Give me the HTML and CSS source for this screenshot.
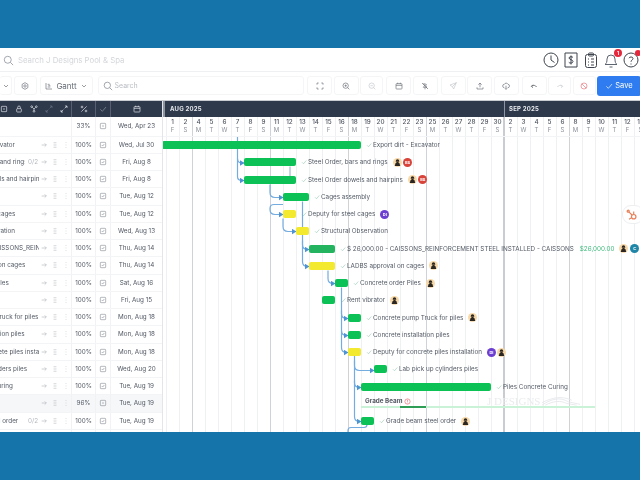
FILE: index.html
```html
<!DOCTYPE html>
<html lang="en">
<head>
    <meta charset="UTF-8">
    <title>Gantt - J Designs Pool &amp; Spa</title>
    <link rel="stylesheet" href="styles.css">
</head>
<body>
    <svg class="defs" xmlns="http://www.w3.org/2000/svg">
        <symbol id="i-search" viewBox="0 0 12 12"><circle cx="5.2" cy="5.2" r="3.8"/><path d="M8 8l3 3"/></symbol>
        <symbol id="i-chev" viewBox="0 0 12 12"><path d="M3 4.5l3 3 3-3"/></symbol>
        <symbol id="i-gear" viewBox="0 0 12 12"><path d="M6 1l4.3 2.5v5L6 11 1.700 8.500v-5z"/><circle cx="6" cy="6" r="1.800"/></symbol>
        <symbol id="i-gantt" viewBox="0 0 12 12"><path d="M1.500 1.500v9h9M4 3.500h3M5 5.500h3M4 7.500h4"/></symbol>
        <symbol id="i-full" viewBox="0 0 12 12"><path d="M1.500 4V1.500H4M8 1.500h2.500V4M10.500 8v2.500H8M4 10.500H1.500V8"/></symbol>
        <symbol id="i-zin" viewBox="0 0 12 12"><circle cx="5.500" cy="5.500" r="4"/><path d="M8.500 8.500L11 11M3.800 5.500h3.400M5.500 3.800v3.400"/></symbol>
        <symbol id="i-zout" viewBox="0 0 12 12"><circle cx="5.500" cy="5.500" r="4"/><path d="M8.500 8.500L11 11M3.800 5.500h3.400"/></symbol>
        <symbol id="i-cal" viewBox="0 0 12 12"><rect x="1.500" y="2.500" width="9" height="8" rx="1"/><path d="M1.500 5h9M4 1v2M8 1v2"/></symbol>
        <symbol id="i-hide" viewBox="0 0 12 12"><path d="M1.500 1.500l9 9M4 2.500l4 1-1 2.500 2 2H3.500l2-2.500zM6 8.500V11"/></symbol>
        <symbol id="i-send" viewBox="0 0 12 12"><path d="M11 1L1.500 4.500 5 7l2 3.500zM11 1L5 7"/></symbol>
        <symbol id="i-up" viewBox="0 0 12 12"><path d="M6 8V1.500M3.500 4L6 1.500 8.500 4M1.500 8v2.500h9V8"/></symbol>
        <symbol id="i-cloud" viewBox="0 0 12 12"><path d="M3.500 8.500a2.500 2.500 0 0 1 0-5 3 3 0 0 1 5.500 0 2.500 2.500 0 0 1-.5 5M6 5.500V11M4.500 9.500L6 11l1.500-1.500"/></symbol>
        <symbol id="i-undo" viewBox="0 0 12 12"><path d="M2 6.500l2.500-2.500M2 6.500l2.500 2M2.500 6.300c3-2 5.500-1.500 7.500 1.200"/></symbol>
        <symbol id="i-redo" viewBox="0 0 12 12"><path d="M10 6.500L7.500 4M10 6.500l-2.500 2M9.500 6.300c-3-2-5.500-1.500-7.500 1.200"/></symbol>
        <symbol id="i-block" viewBox="0 0 12 12"><circle cx="6" cy="6" r="4.500"/><path d="M2.800 2.800l6.400 6.400"/></symbol>
        <symbol id="i-check" viewBox="0 0 12 12"><path d="M2 6.500L5 9.500 10.500 3"/></symbol>
        <symbol id="i-clock" viewBox="0 0 16 16"><circle cx="8" cy="8" r="7"/><path d="M8 3.500V8l3.500 2.500"/></symbol>
        <symbol id="i-bill" viewBox="0 0 16 16"><path d="M2 1h12v14H2zM10 5.500C9.500 4.500 6 4.200 6 6s4 1.500 4 3.500-3.500 2-4.200.8M8 3.500v9"/></symbol>
        <symbol id="i-clip" viewBox="0 0 16 16"><rect x="2.500" y="2.500" width="11" height="13" rx="2"/><rect x="5.500" y="1" width="5" height="3" rx="1"/><path d="M5 7h1M8 7h3M5 10h1M8 10h3M5 13h1M8 13h3"/></symbol>
        <symbol id="i-bell" viewBox="0 0 16 16"><path d="M2 12.500c1.500-1 2-2.500 2-5.500a4 4 0 0 1 8 0c0 3 .5 4.500 2 5.500zM6.500 15h3"/></symbol>
        <symbol id="i-help" viewBox="0 0 16 16"><circle cx="8" cy="8" r="7"/><path d="M6 6.200C6.300 4.500 10 4.500 10 6.500 10 8 8 8 8 9.800M8 11.500v1"/></symbol>
        <symbol id="i-square" viewBox="0 0 12 12"><rect x="2" y="2" width="8" height="8" rx="1"/><path d="M4.500 6h3"/></symbol>
        <symbol id="i-lock" viewBox="0 0 12 12"><rect x="2.500" y="5.500" width="7" height="5" rx="1"/><path d="M4 5.500V3.500a2 2 0 0 1 4 0v2"/></symbol>
        <symbol id="i-fork" viewBox="0 0 12 12"><circle cx="2.500" cy="2.500" r="1.300"/><circle cx="9.500" cy="2.500" r="1.300"/><circle cx="6" cy="9.500" r="1.300"/><path d="M3.500 3.500L6 6l2.500-2.500M6 6v2.500"/></symbol>
        <symbol id="i-expand" viewBox="0 0 12 12"><path d="M7 5l3.500-3.500M7.500 1.500h3v3M5 7l-3.500 3.500M1.500 7.500v3h3"/></symbol>
        <symbol id="i-percent" viewBox="0 0 12 12"><circle cx="3" cy="3" r="1.300"/><circle cx="9" cy="9" r="1.300"/><path d="M10 2L2 10"/></symbol>
        <symbol id="i-arrow" viewBox="0 0 12 12"><path d="M2.500 6h7M7 3.500L9.500 6 7 8.500"/></symbol>
        <symbol id="i-grip" viewBox="0 0 12 12"><path d="M4.800 1.500v2M7.200 1.500v2M4.800 5v2M7.200 5v2M4.800 8.500v2M7.200 8.500v2"/></symbol>
        <symbol id="i-dots" viewBox="0 0 12 12"><path d="M6 2v1M6 5.500v1M6 9v1"/></symbol>
        <symbol id="i-task" viewBox="0 0 12 12"><rect x="2" y="2" width="8" height="8" rx="1"/><path d="M4 6l1.500 1.500 2.500-3"/></symbol>
        <symbol id="i-worker" viewBox="0 0 12 12"><circle cx="6" cy="6" r="6" fill="#f8d9a9" stroke="none"/><path d="M6 1.800a2.300 2.300 0 0 1 2.300 2.300v.9H3.700v-.9A2.300 2.300 0 0 1 6 1.800zM4.500 5.400h3v1.400h-3zM2.300 10.500l1.200-3.700h5l1.200 3.700z" fill="#2a2622" stroke="none"/></symbol>
        <symbol id="i-warn" viewBox="0 0 12 12"><circle cx="6" cy="6" r="4.500"/><path d="M6 3v3.500M6 8v1"/></symbol>
    </svg>

    <div class="band"></div>

    <main class="app">
        <div class="searchbar">
            <svg class="ic-search"><use href="#i-search"/></svg>
            <span class="search-text">Search J Designs Pool &amp; Spa</span>
            <div class="top-icons">
                <svg class="top-ic"><use href="#i-clock"/></svg>
                <svg class="top-ic"><use href="#i-bill"/></svg>
                <svg class="top-ic"><use href="#i-clip"/></svg>
                <span class="top-wrap"><svg class="top-ic light"><use href="#i-bell"/></svg><span class="badge">1</span></span>
                <span class="top-wrap"><svg class="top-ic"><use href="#i-help"/></svg><span class="dot"></span></span>
            </div>
        </div>

        <div class="toolbar">
            <button class="tbtn first"><svg class="ic"><use href="#i-chev"/></svg></button>
            <button class="tbtn gear"><svg class="ic"><use href="#i-gear"/></svg></button>
            <button class="tbtn view"><svg class="ic"><use href="#i-gantt"/></svg>Gantt<svg class="ic"><use href="#i-chev"/></svg></button>
            <div class="tsearch"><svg class="ic big"><use href="#i-search"/></svg>Search</div>
            <button class="tbtn"><svg class="ic"><use href="#i-full"/></svg></button>
            <button class="tbtn"><svg class="ic"><use href="#i-zin"/></svg></button>
            <button class="tbtn off narrow"><svg class="ic"><use href="#i-zout"/></svg></button>
            <button class="tbtn push"><svg class="ic"><use href="#i-cal"/></svg></button>
            <button class="tbtn"><svg class="ic"><use href="#i-hide"/></svg></button>
            <button class="tbtn off push"><svg class="ic"><use href="#i-send"/></svg></button>
            <button class="tbtn"><svg class="ic"><use href="#i-up"/></svg></button>
            <button class="tbtn"><svg class="ic"><use href="#i-cloud"/></svg></button>
            <button class="tbtn dark push"><svg class="ic"><use href="#i-undo"/></svg></button>
            <button class="tbtn off narrow"><svg class="ic"><use href="#i-redo"/></svg></button>
            <button class="tbtn red narrow"><svg class="ic"><use href="#i-block"/></svg></button>
            <button class="save"><svg class="ic"><use href="#i-check"/></svg>Save</button>
        </div>

        <div class="gantt">
            <section class="table">
                <div class="thead">
                    <span class="th-icons">
                        <svg class="ic"><use href="#i-square"/></svg>
                        <svg class="ic"><use href="#i-lock"/></svg>
                        <svg class="ic"><use href="#i-fork"/></svg>
                        <svg class="ic dim"><use href="#i-expand"/></svg>
                        <svg class="ic"><use href="#i-expand"/></svg>
                    </span>
                    <span class="pct"><svg class="ic"><use href="#i-percent"/></svg></span>
                    <span class="chk"><svg class="ic"><use href="#i-check"/></svg></span>
                    <span class="due"><svg class="ic"><use href="#i-cal"/></svg></span>
                </div>
                <div class="row total">
                    <span class="name"></span><span class="acts"></span>
                    <span class="pct">33%</span>
                    <span class="chk"><svg class="ic"><use href="#i-square"/></svg></span>
                    <span class="due">Wed, Apr 23</span>
                </div>
                <div class="row"><span class="name">Export dirt - Excavator</span><span class="acts"><svg class="ic"><use href="#i-arrow"/></svg><svg class="ic"><use href="#i-grip"/></svg><svg class="ic"><use href="#i-dots"/></svg></span><span class="pct">100%</span><span class="chk"><svg class="ic"><use href="#i-task"/></svg></span><span class="due">Wed, Jul 30</span></div>
                <div class="row"><span class="name">Steel Order, bars and rings</span><span class="count">0/2</span><span class="acts"><svg class="ic"><use href="#i-arrow"/></svg><svg class="ic"><use href="#i-grip"/></svg><svg class="ic"><use href="#i-dots"/></svg></span><span class="pct">100%</span><span class="chk"><svg class="ic"><use href="#i-task"/></svg></span><span class="due">Fri, Aug 8</span></div>
                <div class="row"><span class="name">Steel Order dowels and hairpins</span><span class="acts"><svg class="ic"><use href="#i-arrow"/></svg><svg class="ic"><use href="#i-grip"/></svg><svg class="ic"><use href="#i-dots"/></svg></span><span class="pct">100%</span><span class="chk"><svg class="ic"><use href="#i-task"/></svg></span><span class="due">Fri, Aug 8</span></div>
                <div class="row"><span class="name">Cages assembly</span><span class="acts"><svg class="ic"><use href="#i-arrow"/></svg><svg class="ic"><use href="#i-grip"/></svg><svg class="ic"><use href="#i-dots"/></svg></span><span class="pct">100%</span><span class="chk"><svg class="ic"><use href="#i-task"/></svg></span><span class="due">Tue, Aug 12</span></div>
                <div class="row"><span class="name">Deputy for steel cages</span><span class="acts"><svg class="ic"><use href="#i-arrow"/></svg><svg class="ic"><use href="#i-grip"/></svg><svg class="ic"><use href="#i-dots"/></svg></span><span class="pct">100%</span><span class="chk"><svg class="ic"><use href="#i-task"/></svg></span><span class="due">Tue, Aug 12</span></div>
                <div class="row"><span class="name">Structural Observation</span><span class="acts"><svg class="ic"><use href="#i-arrow"/></svg><svg class="ic"><use href="#i-grip"/></svg><svg class="ic"><use href="#i-dots"/></svg></span><span class="pct">100%</span><span class="chk"><svg class="ic"><use href="#i-task"/></svg></span><span class="due">Wed, Aug 13</span></div>
                <div class="row"><span class="name">$ 26,000.00 - CAISSONS_REINFORCEMENT STEEL INSTALLED - CAISSONS</span><span class="acts"><svg class="ic"><use href="#i-arrow"/></svg><svg class="ic"><use href="#i-grip"/></svg><svg class="ic"><use href="#i-dots"/></svg></span><span class="pct">100%</span><span class="chk"><svg class="ic"><use href="#i-task"/></svg></span><span class="due">Thu, Aug 14</span></div>
                <div class="row"><span class="name">LADBS approval on cages</span><span class="acts"><svg class="ic"><use href="#i-arrow"/></svg><svg class="ic"><use href="#i-grip"/></svg><svg class="ic"><use href="#i-dots"/></svg></span><span class="pct">100%</span><span class="chk"><svg class="ic"><use href="#i-task"/></svg></span><span class="due">Thu, Aug 14</span></div>
                <div class="row"><span class="name">Concrete order Piles</span><span class="acts"><svg class="ic"><use href="#i-arrow"/></svg><svg class="ic"><use href="#i-grip"/></svg><svg class="ic"><use href="#i-dots"/></svg></span><span class="pct">100%</span><span class="chk"><svg class="ic"><use href="#i-task"/></svg></span><span class="due">Sat, Aug 16</span></div>
                <div class="row"><span class="name">Rent vibrator</span><span class="acts"><svg class="ic"><use href="#i-arrow"/></svg><svg class="ic"><use href="#i-grip"/></svg><svg class="ic"><use href="#i-dots"/></svg></span><span class="pct">100%</span><span class="chk"><svg class="ic"><use href="#i-task"/></svg></span><span class="due">Fri, Aug 15</span></div>
                <div class="row"><span class="name">Concrete pump Truck for piles</span><span class="acts"><svg class="ic"><use href="#i-arrow"/></svg><svg class="ic"><use href="#i-grip"/></svg><svg class="ic"><use href="#i-dots"/></svg></span><span class="pct">100%</span><span class="chk"><svg class="ic"><use href="#i-task"/></svg></span><span class="due">Mon, Aug 18</span></div>
                <div class="row"><span class="name">Concrete installation piles</span><span class="acts"><svg class="ic"><use href="#i-arrow"/></svg><svg class="ic"><use href="#i-grip"/></svg><svg class="ic"><use href="#i-dots"/></svg></span><span class="pct">100%</span><span class="chk"><svg class="ic"><use href="#i-task"/></svg></span><span class="due">Mon, Aug 18</span></div>
                <div class="row"><span class="name">Deputy for concrete piles installation</span><span class="acts"><svg class="ic"><use href="#i-arrow"/></svg><svg class="ic"><use href="#i-grip"/></svg><svg class="ic"><use href="#i-dots"/></svg></span><span class="pct">100%</span><span class="chk"><svg class="ic"><use href="#i-task"/></svg></span><span class="due">Mon, Aug 18</span></div>
                <div class="row"><span class="name">Lab pick up cylinders piles</span><span class="acts"><svg class="ic"><use href="#i-arrow"/></svg><svg class="ic"><use href="#i-grip"/></svg><svg class="ic"><use href="#i-dots"/></svg></span><span class="pct">100%</span><span class="chk"><svg class="ic"><use href="#i-task"/></svg></span><span class="due">Wed, Aug 20</span></div>
                <div class="row"><span class="name">Piles Concrete Curing</span><span class="acts"><svg class="ic"><use href="#i-arrow"/></svg><svg class="ic"><use href="#i-grip"/></svg><svg class="ic"><use href="#i-dots"/></svg></span><span class="pct">100%</span><span class="chk"><svg class="ic"><use href="#i-task"/></svg></span><span class="due">Tue, Aug 19</span></div>
                <div class="row group"><span class="name">Grade Beam</span><span class="acts"><svg class="ic"><use href="#i-arrow"/></svg><svg class="ic"><use href="#i-grip"/></svg><svg class="ic"><use href="#i-dots"/></svg></span><span class="pct">96%</span><span class="chk"><svg class="ic"><use href="#i-square"/></svg></span><span class="due">Tue, Aug 19</span></div>
                <div class="row"><span class="name">Grade beam steel order</span><span class="count">0/2</span><span class="acts"><svg class="ic"><use href="#i-arrow"/></svg><svg class="ic"><use href="#i-grip"/></svg><svg class="ic"><use href="#i-dots"/></svg></span><span class="pct">100%</span><span class="chk"><svg class="ic"><use href="#i-task"/></svg></span><span class="due">Tue, Aug 19</span></div>
                <div class="row"><span class="name"></span><span class="acts"></span><span class="pct"></span><span class="chk"></span><span class="due"></span></div>
            </section>

            <section class="timeline">
                <div class="months">
                    <span class="month aug">AUG 2025</span>
                    <span class="month sep">SEP 2025</span>
                </div>
                <div class="days">
                    <span>1<i>F</i></span><span>2<i>S</i></span>
                    <span>4<i>M</i></span><span>5<i>T</i></span><span>6<i>W</i></span><span>7<i>T</i></span><span>8<i>F</i></span><span>9<i>S</i></span>
                    <span>11<i>M</i></span><span>12<i>T</i></span><span>13<i>W</i></span><span>14<i>T</i></span><span>15<i>F</i></span><span>16<i>S</i></span>
                    <span>18<i>M</i></span><span>19<i>T</i></span><span>20<i>W</i></span><span>21<i>T</i></span><span>22<i>F</i></span><span>23<i>S</i></span>
                    <span>25<i>M</i></span><span>26<i>T</i></span><span>27<i>W</i></span><span>28<i>T</i></span><span>29<i>F</i></span><span>30<i>S</i></span>
                    <span>2<i>T</i></span><span>3<i>W</i></span><span>4<i>T</i></span><span>5<i>F</i></span><span>6<i>S</i></span>
                    <span>8<i>M</i></span><span>9<i>T</i></span><span>10<i>W</i></span><span>11<i>T</i></span><span>12<i>F</i></span><span>13<i>S</i></span>
                </div>

                <!-- dependency arrows, drawn in page coordinates -->
                <svg class="links" viewBox="163 136.500 477 296">
                    <defs>
                        <marker id="head" markerWidth="5" markerHeight="6" refX="4.500" refY="3" orient="auto" markerUnits="userSpaceOnUse">
                            <path d="M0 0L5 3L0 6z" fill="#4f93d2" stroke="none"/>
                        </marker>
                    </defs>
                    <path class="link" d="M237.500 130V158q0 4.500 4.500 4.500H244" marker-end="url(#head)"/>
                    <path class="link" d="M237.500 158V176q0 4 4.500 4H244" marker-end="url(#head)"/>
                    <path class="link" d="M270 184V192q0 5 5 5H283" marker-end="url(#head)"/>
                    <path class="link" d="M283 204H274q-4 0-4 4V209q0 5 5 5H283" marker-end="url(#head)"/>
                    <path class="link" d="M283 218V226q0 5 5 5H296" marker-end="url(#head)"/>
                    <path class="link" d="M302.500 201V244q0 5 5 5H309" marker-end="url(#head)"/>
                    <path class="link" d="M302.500 240V261q0 5 5 5H309" marker-end="url(#head)"/>
                    <path class="link" d="M328 270V278q0 5 5 5H335" marker-end="url(#head)"/>
                    <path class="link" d="M341.500 287V313q0 5 5 5H348" marker-end="url(#head)"/>
                    <path class="link" d="M341.500 310V330q0 5 5 5H348" marker-end="url(#head)"/>
                    <path class="link" d="M341.500 330V347q0 5 5 5H348" marker-end="url(#head)"/>
                    <path class="link" d="M354.500 350V365q0 5 5 5H374" marker-end="url(#head)"/>
                    <path class="link" d="M354.500 360V382q0 5 5 5H361" marker-end="url(#head)"/>
                    <path class="link" d="M354.500 380V416q0 5 5 5H361" marker-end="url(#head)"/>
                    <path class="link" d="M367 424q0 3-3 3H351q-3 0-3 3v3"/>
                    <path class="link grey" d="M290 166V176"/>
                </svg>

                <div class="rows">
                    <div class="trow"><div class="bar" style="margin-left:-1px;width:199px"></div><div class="label"><svg class="tick"><use href="#i-check"/></svg>Export dirt - Excavator</div></div>
                    <div class="trow"><div class="bar" style="margin-left:81px;width:52px"></div><div class="label"><svg class="tick"><use href="#i-check"/></svg>Steel Order, bars and rings<svg class="av"><use href="#i-worker"/></svg><b class="av red">BS</b></div></div>
                    <div class="trow"><div class="bar" style="margin-left:81px;width:52px"></div><div class="label"><svg class="tick"><use href="#i-check"/></svg>Steel Order dowels and hairpins<svg class="av"><use href="#i-worker"/></svg><b class="av red">BS</b></div></div>
                    <div class="trow"><div class="bar" style="margin-left:120px;width:26px"></div><div class="label"><svg class="tick"><use href="#i-check"/></svg>Cages assembly</div></div>
                    <div class="trow"><div class="bar yellow" style="margin-left:120px;width:13px"></div><div class="label"><svg class="tick"><use href="#i-check"/></svg>Deputy for steel cages<b class="av purple lead">DI</b></div></div>
                    <div class="trow"><div class="bar yellow" style="margin-left:133px;width:13px"></div><div class="label"><svg class="tick"><use href="#i-check"/></svg>Structural Observation</div></div>
                    <div class="trow"><div class="bar dim" style="margin-left:146px;width:26px"></div><div class="label"><svg class="tick"><use href="#i-check"/></svg>$ 26,000.00 - CAISSONS_REINFORCEMENT STEEL INSTALLED - CAISSONS<span class="money">$26,000.00</span><svg class="av"><use href="#i-worker"/></svg><b class="av teal">C</b><b class="av gold">J</b></div></div>
                    <div class="trow"><div class="bar yellow" style="margin-left:146px;width:26px"></div><div class="label"><svg class="tick"><use href="#i-check"/></svg>LADBS approval on cages<svg class="av"><use href="#i-worker"/></svg></div></div>
                    <div class="trow"><div class="bar" style="margin-left:172px;width:13px"></div><div class="label"><svg class="tick"><use href="#i-check"/></svg>Concrete order Piles<svg class="av"><use href="#i-worker"/></svg></div></div>
                    <div class="trow"><div class="bar" style="margin-left:159px;width:13px"></div><div class="label"><svg class="tick"><use href="#i-check"/></svg>Rent vibrator<svg class="av"><use href="#i-worker"/></svg></div></div>
                    <div class="trow"><div class="bar" style="margin-left:185px;width:13px"></div><div class="label"><svg class="tick"><use href="#i-check"/></svg>Concrete pump Truck for piles<svg class="av"><use href="#i-worker"/></svg></div></div>
                    <div class="trow"><div class="bar" style="margin-left:185px;width:13px"></div><div class="label"><svg class="tick"><use href="#i-check"/></svg>Concrete installation piles</div></div>
                    <div class="trow"><div class="bar yellow" style="margin-left:185px;width:13px"></div><div class="label"><svg class="tick"><use href="#i-check"/></svg>Deputy for concrete piles installation<b class="av purple lead">DI</b><svg class="av second"><use href="#i-worker"/></svg></div></div>
                    <div class="trow"><div class="bar" style="margin-left:211px;width:13px"></div><div class="label"><svg class="tick"><use href="#i-check"/></svg>Lab pick up cylinders piles</div></div>
                    <div class="trow"><div class="bar" style="margin-left:198px;width:130px"></div><div class="label"><svg class="tick"><use href="#i-check"/></svg>Piles Concrete Curing</div></div>
                    <div class="trow"><div class="summary" style="margin-left:198px;width:234px"><div class="summary-title">Grade Beam<svg class="warn"><use href="#i-warn"/></svg></div><div class="track"><div class="fill" style="margin-left:39px;width:26px"></div></div></div></div>
                    <div class="trow"><div class="bar" style="margin-left:198px;width:13px"></div><div class="label"><svg class="tick"><use href="#i-check"/></svg>Grade beam steel order<svg class="av"><use href="#i-worker"/></svg></div></div>
                </div>

                <div class="watermark">J DESIGNS
                    <svg class="waves" viewBox="0 0 46 12"><path d="M0 11C12 3 22 1 32 7l14 3M4 11C14 6 22 5 30 9l12 2M0 8C14 1 24 0 36 5"/></svg>
                </div>
                <div class="chat-tab">
                    <svg viewBox="0 0 14 14"><circle cx="9" cy="9" r="2.600"/><path d="M7 7L3 3M9 6.500V3M3.500 12l3.500-2"/><circle cx="2.600" cy="2.600" r="1.200"/></svg>
                </div>
            </section>
        </div>
    </main>

    <div class="band"></div>
</body>
</html>
```

FILE: styles.css
```css
* {
    box-sizing: border-box;
}

body {
    margin: 0;
    width: 640px;
    height: 480px;
    overflow: hidden;
    font-family: Inter, "Liberation Sans", sans-serif;
    font-size: 6.300px;
    color: #525964;
    background-color: #fff;
}

.defs {
    display: none;
}

svg {
    fill: none;
    stroke: currentColor;
    stroke-width: 1;
    flex: none;
}

.band {
    height: 48px;
    background-color: #1575ab;
}

.app {
    height: 384px;
    display: flex;
    flex-direction: column;
    overflow: hidden;
    filter: blur(0.300px);
}

/* search bar */
.searchbar {
    height: 24px;
    flex: none;
    display: flex;
    align-items: center;
    padding-left: 3px;
    padding-top: 1px;
    border-bottom: 1px solid #eef0f2;
}

.ic-search {
    width: 11px;
    height: 11px;
    color: #9aa0a8;
}

.search-text {
    margin-left: 4px;
    font-size: 7.800px;
    color: #d3d6da;
}

.top-icons {
    margin-left: auto;
    margin-right: 1px;
    display: flex;
    align-items: center;
    gap: 4px;
    color: #3d444e;
}

.top-ic {
    width: 16px;
    height: 16px;
    display: block;
}

.top-ic.light {
    color: #5c6470;
}

.top-wrap {
    position: relative;
    display: block;
}

.badge {
    position: absolute;
    top: -3px;
    right: -3px;
    width: 8px;
    height: 8px;
    border-radius: 50%;
    background-color: #e5283c;
    color: #fff;
    font-size: 5px;
    font-weight: 700;
    line-height: 8px;
    text-align: center;
}

.dot {
    position: absolute;
    top: -2px;
    right: -2px;
    width: 6px;
    height: 6px;
    border-radius: 50%;
    background-color: #e5283c;
}

/* toolbar */
.toolbar {
    height: 29px;
    flex: none;
    display: flex;
    align-items: center;
    gap: 1.500px;
    padding-bottom: 1px;
    border-bottom: 1px solid #c9ccd1;
}

.tbtn {
    width: 25px;
    height: 19px;
    padding: 0;
    flex: none;
    display: flex;
    align-items: center;
    justify-content: center;
    gap: 3px;
    font-family: inherit;
    font-size: 8px;
    color: #666d76;
    background-color: #fff;
    border: 1px solid #f4f5f6;
    border-radius: 3px;
}

.tbtn.first {
    width: 12px;
    border-left: none;
}

.tbtn.gear {
    width: 23px;
    margin-right: 2px;
}

.tbtn.view {
    width: 53px;
    margin-right: 3px;
}

.tbtn.narrow {
    width: 23px;
}

.tbtn.push {
    margin-left: 1.500px;
}

.tbtn.off {
    color: #c3c7cc;
}

.tbtn.dark {
    color: #3a4049;
}

.tbtn.red {
    color: #e4747c;
}

.ic {
    width: 8px;
    height: 8px;
}

.ic.big {
    width: 10px;
    height: 10px;
}

.tsearch {
    width: 206px;
    height: 19px;
    flex: none;
    margin-right: 2px;
    padding-left: 4px;
    display: flex;
    align-items: center;
    gap: 2px;
    font-size: 7px;
    color: #b9bdc3;
    border: 1px solid #f4f5f6;
    border-radius: 3px;
}

.tsearch .ic {
    color: #8f959d;
}

.save {
    width: 44px;
    height: 20px;
    padding: 0;
    flex: none;
    display: flex;
    align-items: center;
    justify-content: center;
    gap: 2px;
    font-family: inherit;
    font-size: 7.500px;
    color: #fff;
    background-color: #2e7cf0;
    border: none;
    border-radius: 3px;
}

/* task table */
.gantt {
    flex: 1;
    display: flex;
    min-height: 0;
}

.table {
    width: 215px;
    margin-left: -52px;
    flex: none;
    border-right: 1px solid #e3e5e8;
}

.thead {
    height: 16px;
    display: flex;
    justify-content: flex-end;
    color: #e8eaee;
    background-color: #2e394b;
}

.thead .pct,
.thead .chk,
.thead .due {
    border-left: 1px solid #566072;
}

.th-icons {
    width: 74px;
    display: flex;
    align-items: center;
    justify-content: space-around;
}

.th-icons .dim {
    color: #6a7486;
}

.row {
    height: 17.250px;
    display: flex;
    align-items: stretch;
    border-bottom: 1px solid #f3f4f6;
    white-space: nowrap;
}

.row.total {
    height: 19.500px;
}

.row.group {
    background-color: #f6f7f9;
}

.name {
    flex: 1;
    min-width: 0;
    overflow: hidden;
    line-height: 16px;
}

.count {
    flex: none;
    width: 11px;
    margin-left: 3px;
    line-height: 16px;
    color: #b4b8bf;
}

.acts {
    width: 32px;
    flex: none;
    display: flex;
    align-items: center;
    justify-content: space-around;
    color: #b5b9bf;
}

.pct,
.chk,
.due {
    flex: none;
    display: flex;
    align-items: center;
    justify-content: center;
    border-left: 1px solid #f1f2f4;
}

.pct {
    width: 24px;
}

.chk {
    width: 15px;
    color: #8f959d;
}

.due {
    width: 52px;
}

/* timeline */
.timeline {
    position: relative;
    flex: 1;
    min-width: 0;
    overflow: hidden;
    background-image:
        linear-gradient(#c9ccd1, #c9ccd1),
        linear-gradient(#cfd2d6, #cfd2d6),
        linear-gradient(#cfd2d6, #cfd2d6),
        linear-gradient(#cfd2d6, #cfd2d6),
        linear-gradient(#cfd2d6, #cfd2d6),
        linear-gradient(#cfd2d6, #cfd2d6),
        linear-gradient(to right, #eff0f2 1px, transparent 1px);
    background-size: 2px 100%, 1px 100%, 1px 100%, 1px 100%, 1px 100%, 1px 100%, 13px 100%;
    background-position: 340px 0, 29px 0, 107px 0, 185px 0, 263px 0, 406px 0, 3px 0;
    background-repeat: no-repeat, no-repeat, no-repeat, no-repeat, no-repeat, no-repeat, repeat-x;
}

.months {
    height: 16px;
    display: flex;
    background-color: #2e394b;
    color: #e8eaee;
    font-weight: 700;
    font-size: 6px;
    letter-spacing: 0.200px;
    line-height: 16px;
}

.month.aug {
    width: 341px;
    padding-left: 5px;
    border-left: 2px solid #8d95a2;
}

.month.sep {
    flex: 1;
    padding-left: 4px;
    border-left: 1px solid #8d95a2;
}

.days {
    height: 19.500px;
    padding-left: 3px;
    display: grid;
    grid-template-columns: repeat(37, 13px);
    text-align: center;
    font-weight: 500;
    line-height: 8px;
    color: #4e5560;
    border-bottom: 1px solid #f3f4f6;
}

.days span {
    padding-top: 1px;
}

.days i {
    display: block;
    font-style: normal;
    font-weight: 400;
    font-size: 6px;
    color: #8a9099;
}

.links {
    position: absolute;
    left: 0;
    top: 35.500px;
    width: 477px;
    height: 296px;
}

.link {
    stroke: #74ace0;
    stroke-width: 1.200;
}

.link.grey {
    stroke: #9bb7cf;
}

.rows {
    position: relative;
}

.trow {
    height: 17.250px;
    display: flex;
    align-items: center;
    white-space: nowrap;
}

.bar {
    height: 8px;
    flex: none;
    background-color: #0cc155;
    border-radius: 2px;
}

.bar.yellow {
    background-color: #f3e92e;
}

.bar.dim {
    background-color: #24b45f;
}

.label {
    display: flex;
    align-items: center;
    margin-left: 5px;
}

.tick {
    width: 6px;
    height: 6px;
    margin-right: 1px;
    color: #83bda5;
}

.money {
    margin-left: 6px;
    color: #3fb97c;
}

/* avatars: first one sits off the text, the rest close up */
.av {
    width: 9px;
    height: 9px;
    flex: none;
    margin-left: 5px;
}

b.av {
    display: block;
    margin-left: 1.500px;
    border-radius: 50%;
    font-size: 4px;
    font-weight: 700;
    line-height: 9px;
    text-align: center;
    color: #fff;
}

b.av.lead {
    margin-left: 5px;
}

.av.second {
    margin-left: 1.500px;
}

.av.red {
    background-color: #d8433a;
}

.av.purple {
    background-color: #6c3fd0;
}

.av.teal {
    background-color: #1f86a8;
}

.av.gold {
    background-color: #d69a1c;
}

.summary {
    height: 100%;
    flex: none;
}

.summary-title {
    display: flex;
    align-items: center;
    gap: 2px;
    padding: 1px 0 0 4px;
    height: 11px;
    font-weight: 700;
    color: #555b64;
}

.warn {
    width: 7px;
    height: 7px;
    color: #e0545c;
}

.track {
    height: 2px;
    background-color: #c9f2d7;
}

.fill {
    height: 2px;
    background-color: #2f9d56;
}

.watermark {
    position: absolute;
    left: 324px;
    top: 294px;
    display: flex;
    align-items: center;
    gap: 2px;
    font-family: "Liberation Serif", serif;
    font-size: 11px;
    color: #e9ebed;
    white-space: nowrap;
}

.waves {
    width: 38px;
    height: 12px;
    color: #e4e6e9;
}

.chat-tab {
    position: absolute;
    right: -4px;
    top: 104px;
    width: 22px;
    height: 19px;
    padding: 3px 0 0 3px;
    background-color: #fff;
    border: 1px solid #eceef0;
    border-radius: 9px;
}

.chat-tab svg {
    display: block;
    width: 12px;
    height: 12px;
    color: #e8805a;
    stroke-width: 1.400;
}
```
